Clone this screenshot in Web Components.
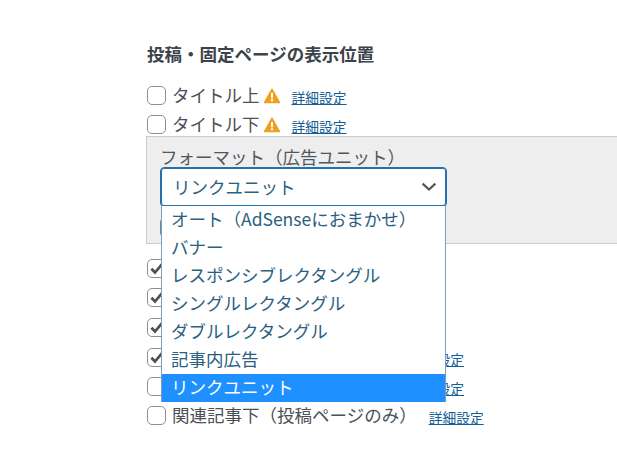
<!DOCTYPE html>
<html lang="ja"><head><meta charset="utf-8">
<style>
html,body{margin:0;padding:0;background:#fff;overflow:hidden}
body{width:617px;height:465px;font-family:"Noto Sans CJK JP","Liberation Sans",sans-serif;color:#3c434a}
</style></head><body>
<settings-page></settings-page>
<template id="t-check"><style>
:host{display:flex;align-items:center;height:var(--h,29px)}
.box{width:17px;height:17px;border:1px solid #8c8f94;border-radius:5px;background:#fff;flex:none;margin-right:6px;position:relative}
svg{position:absolute;left:0;top:0;display:none}
:host([checked]) svg{display:block}
.label{font-size:17.5px;line-height:24px;white-space:nowrap;display:flex;align-items:center;margin-top:-2px;color:#4a5056}
</style><span class="box"><svg width="17" height="17" viewBox="0 0 16 16"><path d="M3.2 8.2 6.6 11.8 13.4 3.6" fill="none" stroke="#50504f" stroke-width="2.6"/></svg></span><span class="label"><slot></slot></span></template>
<template id="t-link"><style>
:host{display:inline-block;font-size:13.75px;line-height:18px;color:#135e96;text-decoration:underline;white-space:nowrap}
</style><slot></slot></template>
<template id="t-warn"><style>
:host{display:inline-flex;width:16px;height:16px;margin-left:4px;margin-top:2px}
</style><svg width="16" height="16" viewBox="0 0 16 16"><path d="M8 1 15.6 14.6H.4Z" fill="#f0a020" stroke="#f0a020" stroke-width="1.4" stroke-linejoin="round"/><rect x="7" y="5" width="2" height="5.4" fill="#fff"/><rect x="7" y="11.2" width="2" height="2" fill="#fff"/></svg></template>
<template id="t-select"><style>
:host{display:block;position:relative;z-index:2;width:287px;height:40px;box-sizing:border-box;border:1px solid #2271b1;box-shadow:0 0 0 1px #2271b1 inset;border-radius:4px;background:#fff;font-size:17.5px}
.v{position:absolute;left:12px;top:7px;line-height:24px;color:#2a6181}
svg{position:absolute;right:9px;top:14px}
.menu{position:absolute;left:0;top:38px;width:285px;box-sizing:border-box;background:#fff;border:1px solid #7d9fb8;border-top:0;border-bottom:0;height:196px;display:flex;flex-direction:column}
::slotted(*){display:block}
</style><span class="v"><slot name="value"></slot></span><svg width="16" height="10" viewBox="0 0 16 10"><path d="M1.6 1.6 8 7.6 14.4 1.6" fill="none" stroke="#50575e" stroke-width="2.2"/></svg><div class="menu"><slot></slot></div></template>
<template id="t-option"><style>
:host{display:block;height:28px;line-height:25px;padding-left:9px;font-size:17.5px;color:#2a6181;white-space:nowrap}
:host([selected]){background:#1e90ff;color:#fff}
</style><slot></slot></template>
<template id="t-panel"><style>
:host{display:block;position:relative;z-index:1;box-sizing:border-box;height:108px;margin-left:-1px;background:#eeeeee;border:1px solid #cccccc;border-right:0;padding:9px 0 0 13px}
.title{font-size:17.5px;line-height:21px;color:#50575e;white-space:nowrap}
.hint{position:absolute;left:13px;top:81px;width:6px;height:17px;border:1px solid #5a8bb0;border-radius:4px}
</style><div class="title"><slot name="title"></slot></div><slot></slot><span class="hint"></span></template>
<template id="t-page"><style>
:host{display:block;padding:43px 0 0 147px;width:617px;box-sizing:border-box}
h2{margin:0 0 17px;font-size:17.5px;line-height:21px;font-weight:700;color:#3c434a;white-space:nowrap}
.after{margin-top:10px;display:flex;flex-direction:column}
</style>
<h2>投稿・固定ページの表示位置</h2>
<x-check>タイトル上<x-warn></x-warn><x-link style="margin-left:12px;margin-top:5px">詳細設定</x-link></x-check>
<x-check>タイトル下<x-warn></x-warn><x-link style="margin-left:12px;margin-top:5px">詳細設定</x-link></x-check>
<x-panel style="margin-top:-3px">
<span slot="title">フォーマット（広告ユニット）</span>
<x-select><span slot="value">リンクユニット</span>
<x-option>オート（AdSenseにおまかせ）</x-option><x-option>バナー</x-option><x-option>レスポンシブレクタングル</x-option><x-option>シングルレクタングル</x-option><x-option>ダブルレクタングル</x-option><x-option>記事内広告</x-option><x-option selected>リンクユニット</x-option>
</x-select>
</x-panel>
<div class="after">
<x-check checked></x-check>
<x-check checked></x-check>
<x-check checked style="--h:30px"></x-check>
<x-check checked style="--h:30px"><x-link style="margin-left:237px;margin-top:5px">詳細設定</x-link></x-check>
<x-check><x-link style="margin-left:237px;margin-top:5px">詳細設定</x-link></x-check>
<x-check>関連記事下（投稿ページのみ）<x-link style="margin-left:12px;margin-top:5px">詳細設定</x-link></x-check>
</div></template>
<script>
const reg=(n,t)=>customElements.define(n,class extends HTMLElement{constructor(){super();this.attachShadow({mode:'open'}).appendChild(document.getElementById(t).content.cloneNode(true))}});
reg('x-check','t-check');reg('x-link','t-link');reg('x-warn','t-warn');reg('x-select','t-select');reg('x-option','t-option');reg('x-panel','t-panel');reg('settings-page','t-page');
</script>
</body></html>
